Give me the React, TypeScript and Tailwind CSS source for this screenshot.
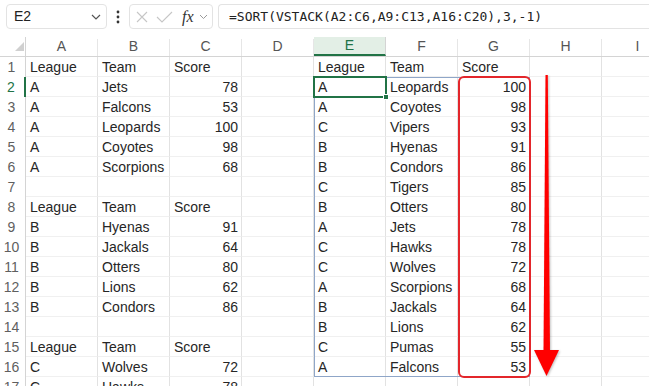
import React from "react";

type V = string | number | null;

const leftData: V[][] = [
  ["League", "Team", "Score"],
  ["A", "Jets", 78],
  ["A", "Falcons", 53],
  ["A", "Leopards", 100],
  ["A", "Coyotes", 98],
  ["A", "Scorpions", 68],
  [null, null, null],
  ["League", "Team", "Score"],
  ["B", "Hyenas", 91],
  ["B", "Jackals", 64],
  ["B", "Otters", 80],
  ["B", "Lions", 62],
  ["B", "Condors", 86],
  [null, null, null],
  ["League", "Team", "Score"],
  ["C", "Wolves", 72],
  ["C", "Hawks", 78],
];

const rightData: V[][] = [
  ["League", "Team", "Score"],
  ["A", "Leopards", 100],
  ["A", "Coyotes", 98],
  ["C", "Vipers", 93],
  ["B", "Hyenas", 91],
  ["B", "Condors", 86],
  ["C", "Tigers", 85],
  ["B", "Otters", 80],
  ["A", "Jets", 78],
  ["C", "Hawks", 78],
  ["C", "Wolves", 72],
  ["A", "Scorpions", 68],
  ["B", "Jackals", 64],
  ["B", "Lions", 62],
  ["C", "Pumas", 55],
  ["A", "Falcons", 53],
  [null, null, null],
];

const cols = ["A", "B", "C", "D", "E", "F", "G", "H", "I"];

function Cell({ v }: { v: V }) {
  const isNum = typeof v === "number";
  return (
    <div
      className={`w-[72px] shrink-0 h-[20px] border-r border-r-[#e2e2e2] border-b border-b-[#f0f0f0] leading-[20px] whitespace-nowrap overflow-visible ${
        isNum ? "text-right pr-[3px]" : "text-left pl-[4px]"
      }`}
    >
      {v === null ? "" : v}
    </div>
  );
}

export default function App() {
  return (
    <div
      className="relative w-[649px] h-[386px] overflow-hidden bg-white text-[#262626]"
      style={{ fontFamily: '"Liberation Sans", Arial, sans-serif' }}
    >
      {/* Formula bar */}
      <div className="flex items-start h-[37px] pt-[4px] pl-[6px]">
        <div className="w-[101px] h-[25px] border border-[#e3e3e3] rounded-[4px] flex items-center justify-between pl-[7px] pr-[5px] text-[14px] text-[#222]">
          <span>E2</span>
          <svg width="10" height="6" viewBox="0 0 10 6">
            <path d="M1 1 L5 5 L9 1" stroke="#555" strokeWidth="1.2" fill="none" />
          </svg>
        </div>
        <div className="w-[22px] h-[25px] flex items-center justify-center">
          <svg width="4" height="14" viewBox="0 0 4 14">
            <circle cx="2" cy="2" r="1.4" fill="#333" />
            <circle cx="2" cy="7" r="1.4" fill="#333" />
            <circle cx="2" cy="12" r="1.4" fill="#333" />
          </svg>
        </div>
        <div className="w-[84px] h-[25px] border border-[#e3e3e3] rounded-[4px] flex items-center pl-[6px]">
          <svg width="12" height="12" viewBox="0 0 12 12">
            <path d="M1 1 L11 11 M11 1 L1 11" stroke="#c6c6c6" strokeWidth="1.1" fill="none" />
          </svg>
          <svg width="17" height="12" viewBox="0 0 17 12" className="ml-[8px]">
            <path d="M1 6 L6 11 L16 1" stroke="#c6c6c6" strokeWidth="1.1" fill="none" />
          </svg>
          <span
            className="ml-[9px] text-[16px] italic text-[#333] leading-none"
            style={{ fontFamily: '"Liberation Serif", "Times New Roman", serif' }}
          >
            fx
          </span>
          <svg width="9" height="6" viewBox="0 0 9 6" className="ml-[5px]">
            <path d="M1 1 L4.5 4.5 L8 1" stroke="#9a9a9a" strokeWidth="1" fill="none" />
          </svg>
        </div>
        <div
          className="flex-1 h-[25px] ml-[5px] border border-r-0 border-[#e3e3e3] rounded-l-[4px] flex items-center pl-[10px] text-[13px] text-[#222] whitespace-nowrap"
          style={{ fontFamily: '"DejaVu Sans Mono", "Liberation Mono", monospace' }}
        >
          =SORT(VSTACK(A2:C6,A9:C13,A16:C20),3,-1)
        </div>
      </div>

      {/* Column header row */}
      <div className="flex h-[20px] border-b border-[#d4d4d4] text-[14px] text-[#555]">
        <div className="w-[26px] shrink-0 border-r border-[#d4d4d4] relative">
          <svg width="9" height="9" viewBox="0 0 9 9" className="absolute left-[15px] top-[5px]">
            <path d="M9 0 L9 9 L0 9 Z" fill="#d0d0d0" />
          </svg>
        </div>
        {cols.map((c) => (
          <div
            key={c}
            className={`w-[72px] shrink-0 flex items-center justify-center pb-[1px] ${
              c === "E"
                ? "bg-[#e3efe6] text-[#217346] border-b-2 border-[#217346] border-r border-r-[#d4d4d4]"
                : "border-r border-[#e6e6e6] mt-[2px]"
            }`}
          >
            <span className={c === "E" ? "" : "-mt-[2px]"}>{c}</span>
          </div>
        ))}
      </div>

      {/* Rows */}
      <div className="flex flex-col text-[14px]">
        {leftData.map((lr, i) => {
          const n = i + 1;
          const rr = rightData[i];
          return (
            <div key={n} className="flex">
              <div
                className={`w-[26px] shrink-0 h-[20px] leading-[20px] text-center pr-[2px] text-[14px] ${
                  n === 2
                    ? "text-[#217346] border-r-2 border-[#217346]"
                    : "text-[#5f5f5f] border-r border-[#d4d4d4]"
                }`}
              >
                {n}
              </div>
              <Cell v={lr[0]} />
              <Cell v={lr[1]} />
              <Cell v={lr[2]} />
              <Cell v={null} />
              <Cell v={rr[0]} />
              <Cell v={rr[1]} />
              <Cell v={rr[2]} />
              <Cell v={null} />
              <Cell v={null} />
            </div>
          );
        })}
      </div>

      {/* Spill range border */}
      <div className="absolute left-[314px] top-[77px] w-[216px] h-[300px] border border-[#8fa6c8] pointer-events-none" />

      {/* Active cell */}
      <div className="absolute left-[313px] top-[76px] w-[74px] h-[22px] border-2 border-[#217346] pointer-events-none" />
      <div className="absolute left-[383px] top-[94px] w-[6px] h-[6px] bg-[#217346] border border-white pointer-events-none" />

      {/* Red highlight box */}
      <div className="absolute left-[458px] top-[76px] w-[73px] h-[302px] border-2 border-[#e3262b] rounded-[6px] pointer-events-none" />

      {/* Red arrow */}
      <svg
        className="absolute left-0 top-0 pointer-events-none"
        width="649"
        height="386"
        viewBox="0 0 649 386"
        style={{ filter: "drop-shadow(1px 1px 1px rgba(0,0,0,0.25))" }}
      >
        <polygon points="545.5,75 547.8,75 550,352 543.5,352" fill="#ff0000" />
        <polygon points="534,350 559,350 546.5,376" fill="#ff0000" />
      </svg>
    </div>
  );
}
